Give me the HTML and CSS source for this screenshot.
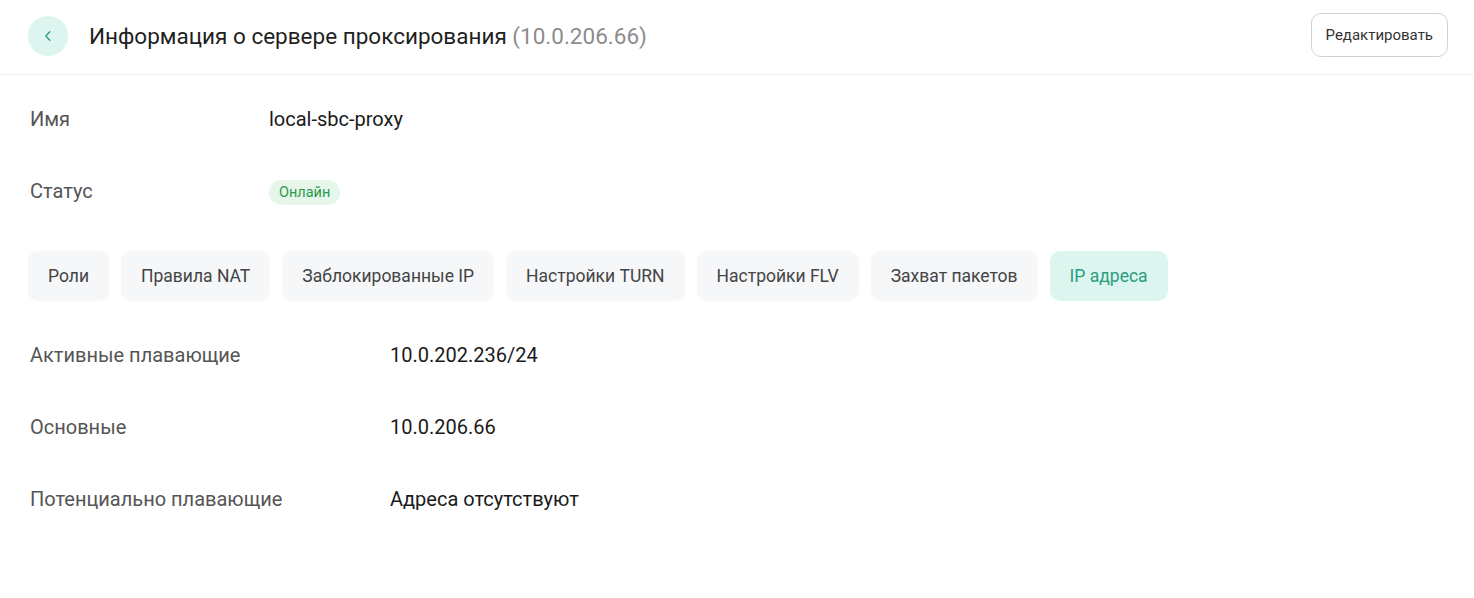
FILE: index.html
```html
<!DOCTYPE html>
<html lang="ru">
<head>
<meta charset="utf-8">
<title>Информация о сервере проксирования</title>
<link rel="stylesheet" href="styles.css">
</head>
<body>
<header class="topbar">
  <div class="title-group">
    <button class="back-btn" aria-label="Назад">
      <svg width="16" height="16" viewBox="0 0 16 16"><path d="M9.8 3.8 L5.8 8 L9.8 12.2" fill="none" stroke="#2a9d7f" stroke-width="1.3" stroke-linecap="round" stroke-linejoin="round"/></svg>
    </button>
    <h1 class="title">Информация о сервере проксирования <span class="title-ip">(10.0.206.66)</span></h1>
  </div>
  <button class="edit-btn">Редактировать</button>
</header>
<main class="content">
  <dl class="info info-main">
    <dt>Имя</dt><dd>local-sbc-proxy</dd>
    <dt>Статус</dt><dd><span class="badge">Онлайн</span></dd>
  </dl>
  <nav class="tabs">
    <span class="tab">Роли</span>
    <span class="tab">Правила NAT</span>
    <span class="tab">Заблокированные IP</span>
    <span class="tab">Настройки TURN</span>
    <span class="tab">Настройки FLV</span>
    <span class="tab">Захват пакетов</span>
    <span class="tab tab-active">IP адреса</span>
  </nav>
  <dl class="info info-ip">
    <dt>Активные плавающие</dt><dd>10.0.202.236/24</dd>
    <dt>Основные</dt><dd>10.0.206.66</dd>
    <dt>Потенциально плавающие</dt><dd>Адреса отсутствуют</dd>
  </dl>
</main>
</body>
</html>
```

FILE: styles.css
```css
* { box-sizing: border-box; }
body {
  margin: 0;
  font-family: Roboto, "Noto Sans", "Liberation Sans", sans-serif;
  background: #fff;
  color: #1a1a1a;
}
.topbar {
  height: 75px;
  display: flex;
  align-items: center;
  justify-content: space-between;
  padding: 0 26px 4px 28px;
  border-bottom: 1px solid #f0f0f0;
}
.title-group {
  display: flex;
  align-items: center;
  gap: 21px;
  margin-top: 2px;
}
.back-btn {
  width: 40px;
  height: 40px;
  border-radius: 50%;
  border: none;
  background: #dcf5ee;
  display: flex;
  align-items: center;
  justify-content: center;
  padding: 0;
}
.title {
  margin: 0;
  font-size: 22.5px;
  font-weight: 400;
  color: #1f1f1f;
}
.title-ip { color: #8c8c8c; }
.edit-btn {
  height: 44px;
  padding: 0 14px;
  border: 1px solid #d2d2d2;
  border-radius: 10px;
  background: #fff;
  font-family: inherit;
  font-size: 15px;
  color: #333;
}
.content {
  padding: 8px 30px 0;
}
.info {
  margin: 0;
  display: grid;
  grid-auto-rows: 72px;
  align-items: center;
}
.info-main { grid-template-columns: 239px 1fr; }
.info-ip { grid-template-columns: 360px 1fr; margin-top: 18px; }
.info dt {
  font-size: 20px;
  color: #555;
}
.info dd {
  margin: 0;
  font-size: 20px;
  color: #1a1a1a;
}
.badge {
  display: inline-block;
  height: 25px;
  line-height: 25px;
  padding: 0 10px;
  border-radius: 13px;
  background: #e6f6ea;
  color: #2b9a4a;
  font-size: 14.5px;
}
.tabs {
  display: flex;
  gap: 12px;
  margin: 24px 0 0 -2px;
}
.tab {
  height: 50px;
  display: flex;
  align-items: center;
  padding: 0 20px;
  border-radius: 10px;
  background: #f5f7f9;
  font-size: 17.5px;
  color: #444;
}
.tab-active {
  background: #dcf5ee;
  color: #2a9d7f;
}
```
